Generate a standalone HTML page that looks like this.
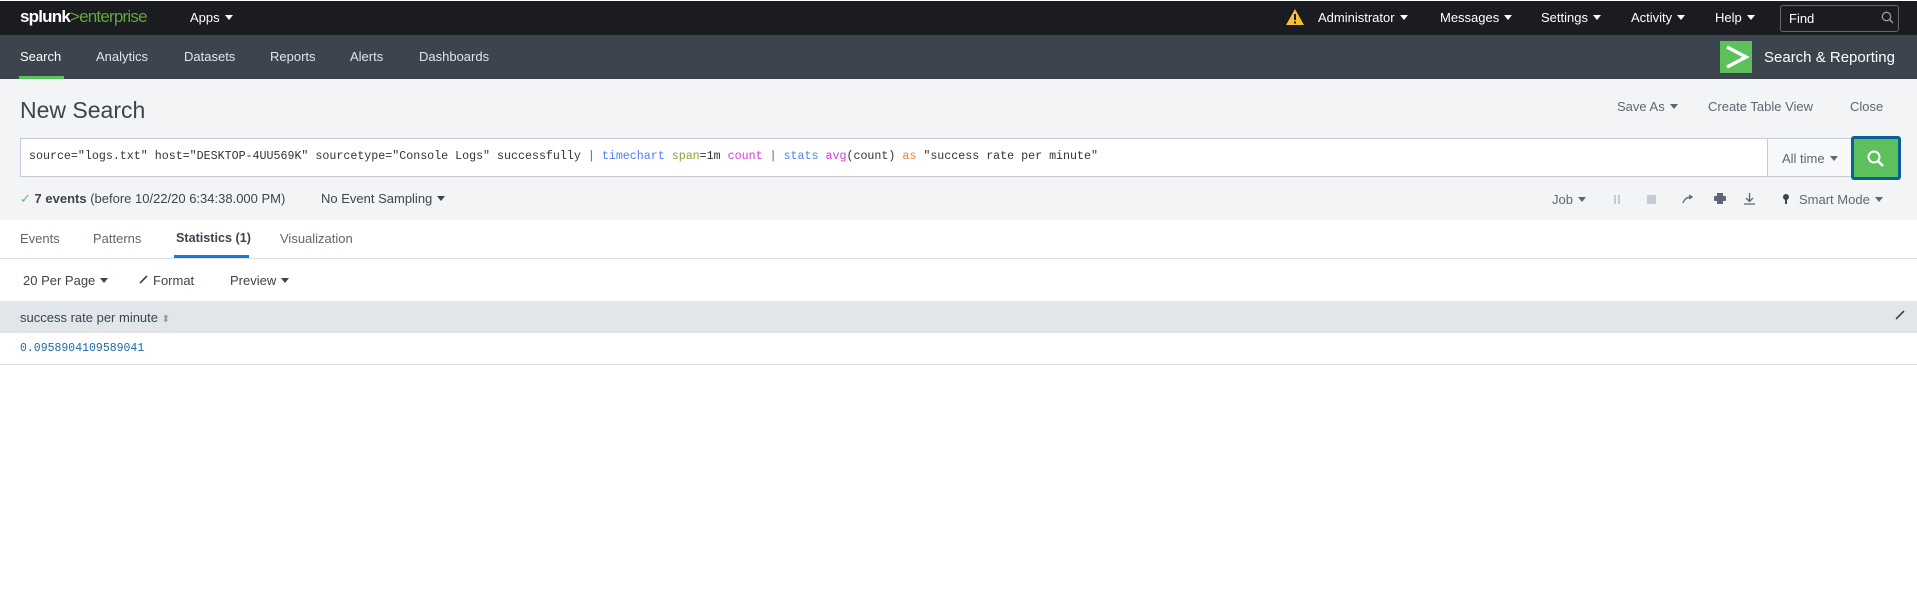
<!DOCTYPE html>
<html><head><meta charset="utf-8"><style>
*{margin:0;padding:0;box-sizing:border-box}
body{width:1917px;height:603px;background:#fff;font-family:"Liberation Sans",sans-serif;position:relative;overflow:hidden;color:#3c444d}
.a{position:absolute;white-space:nowrap}
.top{position:absolute;left:0;top:0;width:1917px;height:35px;background:#1a1c20;border-top:1px solid #fff}
.nav{position:absolute;left:0;top:35px;width:1917px;height:44px;background:#3c444d}
.tw{color:#fff;font-size:13px}
.car{display:inline-block;width:0;height:0;border-left:4px solid transparent;border-right:4px solid transparent;border-top:5px solid currentColor;vertical-align:2px;margin-left:5px}
.gray{position:absolute;left:0;top:79px;width:1917px;height:141px;background:#f2f4f5}
.q{font-family:"Liberation Mono",monospace;font-size:11.65px;color:#333}
</style></head><body>
<div class="top"></div>
<div class="a" style="left:20px;top:7px;font-size:17px;color:#fff;font-weight:bold;letter-spacing:-0.8px">splunk<span style="color:#65a637;font-weight:normal">&gt;enterprise</span></div>
<div class="a tw" style="left:190px;top:10px">Apps<span class="car"></span></div>
<svg class="a" style="left:1285px;top:8px" width="20" height="18" viewBox="0 0 20 18"><path d="M10 1L19 17H1Z" fill="#f8be34"/><rect x="9" y="6" width="2" height="6" fill="#1a1c20"/><rect x="9" y="13.5" width="2" height="2" fill="#1a1c20"/></svg>
<div class="a tw" style="left:1318px;top:10px">Administrator<span class="car"></span></div>
<div class="a tw" style="left:1440px;top:10px">Messages<span class="car"></span></div>
<div class="a tw" style="left:1541px;top:10px">Settings<span class="car"></span></div>
<div class="a tw" style="left:1631px;top:10px">Activity<span class="car"></span></div>
<div class="a tw" style="left:1715px;top:10px">Help<span class="car"></span></div>
<div class="a" style="left:1780px;top:5px;width:119px;height:27px;border:1px solid #666;border-radius:3px"></div>
<div class="a tw" style="left:1789px;top:11px">Find</div>
<svg class="a" style="left:1881px;top:11px" width="13" height="13" viewBox="0 0 13 13"><circle cx="5.5" cy="5.5" r="4.2" fill="none" stroke="#999" stroke-width="1.3"/><path d="M8.5 8.5L12 12" stroke="#999" stroke-width="1.5"/></svg>
<div class="nav"></div>
<div class="a tw" style="left:20px;top:49px">Search</div>
<div class="a" style="left:19px;top:76px;width:45px;height:3px;background:#5cc05c"></div>
<div class="a tw" style="left:96px;top:49px;color:#e1e6eb">Analytics</div>
<div class="a tw" style="left:184px;top:49px;color:#e1e6eb">Datasets</div>
<div class="a tw" style="left:270px;top:49px;color:#e1e6eb">Reports</div>
<div class="a tw" style="left:350px;top:49px;color:#e1e6eb">Alerts</div>
<div class="a tw" style="left:419px;top:49px;color:#e1e6eb">Dashboards</div>
<div class="a" style="left:1720px;top:41px;width:32px;height:32px;background:#5cc05c"></div>
<svg class="a" style="left:1720px;top:41px" width="32" height="32" viewBox="0 0 32 32"><path d="M7 6L26 16L7 26" fill="none" stroke="#fff" stroke-width="3.5"/></svg>
<div class="a" style="left:1764px;top:49px;font-size:15px;color:#fff">Search &amp; Reporting</div>
<div class="gray"></div>
<div class="a" style="left:20px;top:97px;font-size:23px;color:#3c444d">New Search</div>
<div class="a" style="left:1617px;top:99px;font-size:13px;color:#5c6773">Save As<span class="car"></span></div>
<div class="a" style="left:1708px;top:99px;font-size:13px;color:#5c6773">Create Table View</div>
<div class="a" style="left:1850px;top:99px;font-size:13px;color:#5c6773">Close</div>
<div class="a" style="left:20px;top:138px;width:1832px;height:39px;background:#fff;border:1px solid #c3cbd4;border-right:none"></div>
<div class="a q" style="left:29px;top:150px">source="logs.txt" host="DESKTOP-4UU569K" sourcetype="Console Logs" successfully <span style="color:#666">|</span> <span style="color:#4c7df7">timechart</span> <span style="color:#8ba02f">span</span>=1m <span style="color:#d63ad6">count</span> <span style="color:#666">|</span> <span style="color:#4c7df7">stats</span> <span style="color:#d63ad6">avg</span>(count) <span style="color:#f58220">as</span> "success rate per minute"</div>
<div class="a" style="left:1767px;top:138px;width:85px;height:39px;background:#f7f8fa;border:1px solid #c3cbd4;border-right:none"></div>
<div class="a" style="left:1782px;top:151px;font-size:13px;color:#5c6773">All time<span class="car"></span></div>
<div class="a" style="left:1851px;top:136px;width:50px;height:44px;background:#5cc05c;border:3px solid #0b5f99;border-radius:3px"></div>
<svg class="a" style="left:1866px;top:149px" width="20" height="20" viewBox="0 0 20 20"><circle cx="8" cy="8" r="5.5" fill="none" stroke="#fff" stroke-width="2"/><path d="M12 12L17 17" stroke="#fff" stroke-width="2.5"/></svg>
<div class="a" style="left:20px;top:191px;font-size:13px;color:#3c444d"><span style="color:#5cc05c">✓</span> <b>7 events</b> (before 10/22/20 6:34:38.000 PM)</div>
<div class="a" style="left:321px;top:191px;font-size:13px;color:#3c444d">No Event Sampling<span class="car"></span></div>
<div class="a" style="left:1552px;top:192px;font-size:13px;color:#5c6773">Job<span class="car"></span></div>
<div class="a" style="left:1614px;top:195px;width:2px;height:9px;background:#c3cbd4"></div><div class="a" style="left:1618px;top:195px;width:2px;height:9px;background:#c3cbd4"></div>
<div class="a" style="left:1647px;top:195px;width:9px;height:9px;background:#c3cbd4"></div>
<svg class="a" style="left:1682px;top:194px" width="12" height="10" viewBox="0 0 12 10"><path d="M1 9Q3 3 9 3M7 1L10 3L7 5" fill="none" stroke="#5c6773" stroke-width="1.3"/></svg>
<svg class="a" style="left:1714px;top:193px" width="12" height="11" viewBox="0 0 12 11"><rect x="3" y="0" width="6" height="3" fill="#5c6773"/><rect x="0" y="3" width="12" height="5" rx="1" fill="#5c6773"/><rect x="3" y="7" width="6" height="4" fill="#5c6773"/></svg>
<svg class="a" style="left:1744px;top:193px" width="11" height="12" viewBox="0 0 11 12"><path d="M5.5 0V8M2 5L5.5 8.5L9 5M0 11H11" fill="none" stroke="#5c6773" stroke-width="1.3"/></svg>
<div class="a" style="left:1783px;top:194px;width:6px;height:6px;border-radius:50%;background:#3c444d"></div><div class="a" style="left:1785px;top:199px;width:2px;height:5px;background:#3c444d"></div>
<div class="a" style="left:1799px;top:192px;font-size:13px;color:#5c6773">Smart Mode<span class="car"></span></div>
<div class="a" style="left:20px;top:231px;font-size:13px;color:#5c6773">Events</div>
<div class="a" style="left:93px;top:231px;font-size:13px;color:#5c6773">Patterns</div>
<div class="a" style="left:176px;top:231px;font-size:12.6px;color:#3c444d;font-weight:bold">Statistics (1)</div>
<div class="a" style="left:280px;top:231px;font-size:13px;color:#5c6773">Visualization</div>
<div class="a" style="left:174px;top:255px;width:75px;height:3px;background:#1a7ad4"></div>
<div class="a" style="left:0;top:258px;width:1917px;height:1px;background:#dce0e6"></div>
<div class="a" style="left:23px;top:273px;font-size:13px;color:#3c444d">20 Per Page<span class="car"></span></div>
<svg class="a" style="left:139px;top:275px" width="9" height="9" viewBox="0 0 9 9"><path d="M1 8L8 1" stroke="#3c444d" stroke-width="1.6"/></svg>
<div class="a" style="left:153px;top:273px;font-size:13px;color:#3c444d">Format</div>
<div class="a" style="left:230px;top:273px;font-size:13px;color:#3c444d">Preview<span class="car"></span></div>
<div class="a" style="left:0;top:301px;width:1917px;height:32px;background:#e1e6eb"></div>
<div class="a" style="left:20px;top:310px;font-size:13px;color:#3c444d">success rate per minute <span style="color:#999;font-size:10px">⬍</span></div>
<svg class="a" style="left:1895px;top:310px" width="10" height="10" viewBox="0 0 10 10"><path d="M1 9L9 1" stroke="#3c444d" stroke-width="1.6"/></svg>
<div class="a" style="left:20px;top:342px;font-family:'Liberation Mono',monospace;font-size:11.5px;color:#1a6aa8">0.0958904109589041</div>
<div class="a" style="left:0;top:364px;width:1917px;height:1px;background:#dce0e6"></div>
</body></html>
